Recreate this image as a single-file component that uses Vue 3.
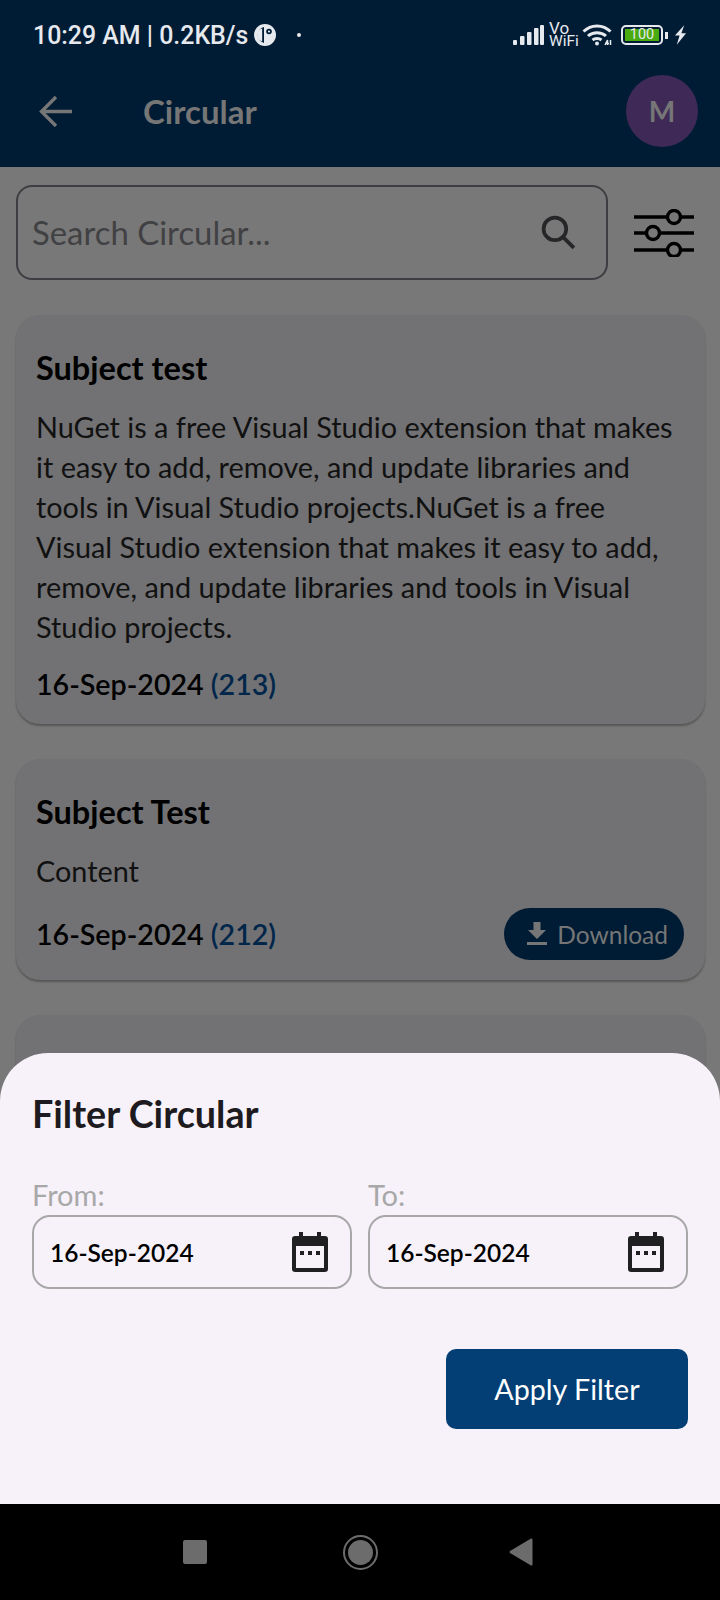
<script setup>
import { ref } from "vue";

const nuget =
  "NuGet is a free Visual Studio extension that makes it easy to add, remove, and update libraries and tools in Visual Studio projects.NuGet is a free Visual Studio extension that makes it easy to add, remove, and update libraries and tools in Visual Studio projects.";

const circulars = ref([
  { id: 213, subject: "Subject test", content: nuget, date: "16-Sep-2024", download: false },
  { id: 212, subject: "Subject Test", content: "Content", date: "16-Sep-2024", download: true },
  { id: 211, subject: "", content: "", date: "", download: false },
]);

const filters = ref([
  { label: "From:", value: "16-Sep-2024" },
  { label: "To:", value: "16-Sep-2024" },
]);
</script>

<template>
  <div class="screen">
    <header class="appbar">
      <div class="status">
        <div class="status-left">
          <span class="clock">10:29 AM | 0.2KB/s</span>
          <svg class="data-saver" width="22" height="22" viewBox="0 0 22 22">
            <circle cx="11" cy="11" r="11" fill="#e6e9ee" />
            <path d="M10 3 A8.2 8.2 0 0 0 10 19 Z" fill="#001c35" />
            <path d="M8.2 4.6 A6.6 6.6 0 0 0 8.2 17.4 Z" fill="#e6e9ee" />
            <circle cx="15" cy="7.5" r="2.8" fill="#001c35" />
            <circle cx="15" cy="7.5" r="1.1" fill="#e6e9ee" />
          </svg>
          <span class="dot"></span>
        </div>
        <div class="status-right">
          <svg class="signal" width="31" height="20" viewBox="0 0 31 20" fill="#e6e9ee">
            <rect x="0" y="15" width="4" height="5" rx="1" />
            <rect x="7" y="11" width="4.5" height="9" rx="1" />
            <rect x="14" y="7" width="4.5" height="13" rx="1" />
            <rect x="21" y="3" width="4.5" height="17" rx="1" />
            <rect x="27" y="0" width="4" height="20" rx="1" />
          </svg>
          <div class="vowifi"><span>Vo</span><span>WiFi</span></div>
          <svg class="wifi" width="31" height="24" viewBox="0 0 31 24" fill="none" stroke="#e6e9ee" stroke-width="3">
            <path d="M1.5 8.5 C 9 1 21 1 28.5 8.5" />
            <path d="M6 13 C 11 8.5 19 8.5 24 13" />
            <path d="M10.5 17 C 13 15 17 15 19.5 17" />
            <circle cx="15" cy="20.5" r="2" fill="#e6e9ee" stroke="none" />
            <path d="M23 22 L25.5 17 V22 M23 20.5 H27 M28.5 17 V22" stroke-width="1.5" />
          </svg>
          <div class="battery">
            <div class="battery-body"><span>100</span></div>
            <div class="battery-cap"></div>
          </div>
          <svg class="bolt" width="13" height="20" viewBox="0 0 14 21" fill="#e6e9ee">
            <path d="M11 0 L1 11 H6 L3 21 L13 8.5 H8 Z" />
          </svg>
        </div>
      </div>
      <div class="toolbar">
        <svg class="back" width="34" height="32" viewBox="0 0 34 32" fill="none" stroke="#767676" stroke-width="3.4">
          <path d="M33 16.5 H3 M17 2 L2.5 16.5 L17 31" />
        </svg>
        <h1>Circular</h1>
        <div class="avatar">M</div>
      </div>
    </header>

    <main class="content">
      <div class="search-row">
        <div class="search">
          <span>Search Circular...</span>
          <svg width="37" height="37" viewBox="0 0 36 36" fill="none" stroke="#262628" stroke-width="3.6">
            <circle cx="14.5" cy="14.5" r="11" />
            <path d="M22.5 22.5 L33 33" />
          </svg>
        </div>
        <svg class="sliders" width="60" height="48" viewBox="0 0 60 48" fill="#787878" stroke="#000" stroke-width="3.4">
          <path d="M0 8 H60 M0 24 H60 M0 41 H60" />
          <circle cx="40" cy="8" r="6.5" />
          <circle cx="19" cy="24" r="6.5" />
          <circle cx="40" cy="41" r="6.5" />
        </svg>
      </div>

      <article v-for="item in circulars" :key="item.id" class="card">
        <template v-if="item.subject">
          <h2>{{ item.subject }}</h2>
          <p>{{ item.content }}</p>
          <div class="card-foot">
            <div class="stamp">{{ item.date }} <span>({{ item.id }})</span></div>
            <button v-if="item.download" class="download">
              <svg width="22" height="24" viewBox="0 0 22 24" fill="#767676">
                <path d="M7.5 0 H14.5 V8 H20 L11 17 L2 8 H7.5 Z" />
                <rect x="1" y="20" width="20" height="3" />
              </svg>
              Download
            </button>
          </div>
        </template>
      </article>
    </main>

    <section class="sheet">
      <h3>Filter Circular</h3>
      <div class="fields">
        <div v-for="f in filters" :key="f.label" class="field">
          <label>{{ f.label }}</label>
          <div class="date-box">
            <span>{{ f.value }}</span>
            <svg width="36" height="40" viewBox="0 0 36 40" fill="#202022">
              <path d="M7 0 H11 V4 H25 V0 H29 V4 H33 A3 3 0 0 1 36 7 V37 A3 3 0 0 1 33 40 H3 A3 3 0 0 1 0 37 V7 A3 3 0 0 1 3 4 H7 Z M4 14 V36 H32 V14 Z" fill-rule="evenodd" />
              <rect x="8" y="19" width="4" height="4" />
              <rect x="16" y="19" width="4" height="4" />
              <rect x="24" y="19" width="4" height="4" />
            </svg>
          </div>
        </div>
      </div>
      <div class="actions">
        <button class="apply">Apply Filter</button>
      </div>
    </section>

    <nav class="navbar">
      <div class="nav-square"></div>
      <div class="nav-home"><div></div></div>
      <svg width="24" height="28" viewBox="0 0 24 28" fill="#6c6c6c">
        <path d="M22 0.5 Q23.5 0 23.5 2 V26 Q23.5 28 22 27.5 L1 15 Q0 14 1 13 Z" />
      </svg>
    </nav>
  </div>
</template>

<style scoped>
.screen {
  position: relative;
  width: 720px;
  height: 1600px;
  overflow: hidden;
  background: #787878;
  font-family: Lato, "Noto Sans", sans-serif;
  color: #000;
}

.appbar {
  height: 167px;
  background: #001c35;
  padding: 0 22px 0 33px;
  box-sizing: border-box;
}

.status {
  display: flex;
  justify-content: space-between;
  align-items: center;
  height: 70px;
}

.status-left,
.status-right {
  display: flex;
  align-items: center;
}

.clock {
  font-family: Roboto, sans-serif;
  font-size: 24.9px;
  font-weight: 500;
  color: #e6e9ee;
}

.data-saver {
  margin-left: 6px;
}

.dot {
  width: 4px;
  height: 4px;
  margin-left: 21px;
  border-radius: 50%;
  background: #e6e9ee;
}

.status-right {
  margin-right: 11px;
}

.vowifi {
  display: flex;
  flex-direction: column;
  width: 28px;
  margin-left: 5px;
  font-family: Roboto, sans-serif;
  font-size: 15.5px;
  line-height: 13px;
  color: #e6e9ee;
}

.vowifi span:first-child {
  font-size: 17px;
}

.wifi {
  margin-left: 5px;
}

.battery {
  display: flex;
  align-items: center;
  margin-left: 8px;
}

.battery-body {
  width: 42px;
  height: 20px;
  box-sizing: border-box;
  padding: 2px;
  border: 2.5px solid #e6e9ee;
  border-radius: 5px;
}

.battery-body span {
  display: block;
  height: 100%;
  background: #4aab10;
  font-family: Roboto, sans-serif;
  font-size: 14.5px;
  line-height: 11px;
  text-align: center;
  color: #e6e9ee;
}

.battery-cap {
  width: 3px;
  height: 7px;
  margin-left: 2px;
  background: #e6e9ee;
}

.bolt {
  margin-left: 6px;
}

.toolbar {
  display: flex;
  align-items: center;
  height: 72px;
  margin-top: 5px;
}

.back {
  margin-left: 6px;
}

.toolbar h1 {
  margin: 0 0 0 70px;
  font-size: 33px;
  font-weight: 700;
  color: #767676;
}

.avatar {
  width: 72px;
  height: 72px;
  margin-left: auto;
  border-radius: 50%;
  background: #3f2a57;
  color: #767676;
  font-size: 28px;
  font-weight: 700;
  line-height: 72px;
  text-align: center;
}

.content {
  padding: 18px 15px 0 16px;
}

.search-row {
  display: flex;
  align-items: center;
  gap: 26px;
  margin-bottom: 35px;
}

.search {
  display: flex;
  align-items: center;
  justify-content: space-between;
  flex: 1;
  height: 95px;
  box-sizing: border-box;
  padding: 0 29px 0 14px;
  border: 2px solid #3e3e42;
  border-radius: 16px;
  font-size: 32.9px;
  color: #414144;
}

.sliders {
  margin-right: 11px;
  flex-shrink: 0;
}

.card {
  padding: 32px 21px 20px 20px;
  margin-bottom: 35px;
  border-radius: 24px;
  background: #727274;
  box-shadow: 0 2px 2px rgba(0, 0, 0, 0.28);
}

.card:last-child {
  height: 200px;
}

.card h2 {
  margin: 0;
  font-size: 32.5px;
  line-height: 42px;
  font-weight: 700;
}

.card p {
  margin: 18px 0 0;
  font-size: 28.85px;
  line-height: 40px;
  color: #111;
}

.card-foot {
  display: flex;
  align-items: center;
  justify-content: space-between;
  margin-top: 17px;
}

.stamp {
  font-size: 28.6px;
  line-height: 40px;
  font-weight: 600;
}

.stamp span {
  color: #00264a;
}

.download {
  display: flex;
  align-items: center;
  gap: 9px;
  height: 52px;
  padding: 0 16px 0 22px;
  border: 0;
  border-radius: 26px;
  background: #001c35;
  color: #767676;
  font-family: inherit;
  font-size: 24.5px;
}

.sheet {
  position: absolute;
  left: 0;
  right: 0;
  top: 1053px;
  height: 451px;
  box-sizing: border-box;
  padding: 38px 32px 0;
  border-radius: 48px 48px 0 0;
  background: #f7f2fa;
}

.sheet h3 {
  margin: 0;
  font-size: 37.7px;
  line-height: 46px;
  font-weight: 700;
  color: #1d1b20;
}

.fields {
  display: grid;
  grid-template-columns: 1fr 1fr;
  gap: 16px;
  margin-top: 38px;
}

.field label {
  display: block;
  font-size: 29px;
  line-height: 40px;
  color: #a8a8a8;
}

.date-box {
  display: flex;
  align-items: center;
  justify-content: space-between;
  height: 74px;
  box-sizing: border-box;
  padding: 0 22px 0 16px;
  border: 2px solid #a8a8a8;
  border-radius: 18px;
  font-size: 24.5px;
  font-weight: 600;
  color: #000;
}

.actions {
  display: flex;
  justify-content: flex-end;
  margin-top: 60px;
}

.apply {
  width: 242px;
  height: 80px;
  padding-bottom: 2px;
  border: 0;
  border-radius: 10px;
  background: #033e75;
  color: #fff;
  font-family: inherit;
  font-size: 28.7px;
}

.navbar {
  position: absolute;
  left: 0;
  right: 0;
  bottom: 0;
  height: 96px;
  display: flex;
  align-items: center;
  justify-content: space-between;
  box-sizing: border-box;
  padding: 0 187px 0 183px;
  background: #000;
}

.nav-square {
  width: 24px;
  height: 24px;
  border-radius: 2px;
  background: #6c6c6c;
}

.nav-home {
  display: flex;
  align-items: center;
  justify-content: center;
  width: 35px;
  height: 35px;
  margin-left: 5px;
  box-sizing: border-box;
  border: 2.5px solid #6c6c6c;
  border-radius: 50%;
}

.nav-home div {
  width: 25px;
  height: 25px;
  border-radius: 50%;
  background: #6c6c6c;
}
</style>
